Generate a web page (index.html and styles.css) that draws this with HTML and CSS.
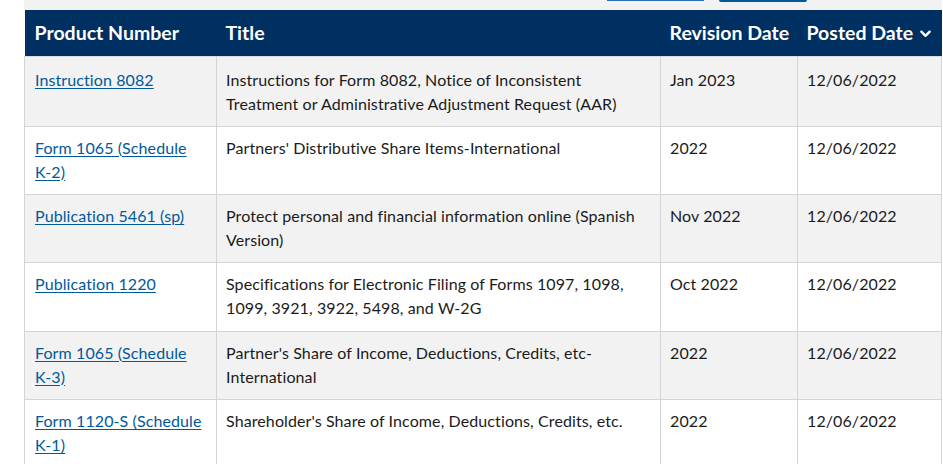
FILE: index.html
```html
<!DOCTYPE html>
<html lang="en">
<head>
<meta charset="utf-8">
<title>Forms &amp; Publications</title>
<link rel="stylesheet" href="styles.css">
</head>
<body>
<div class="page">
  <div class="toolbar">
    <span class="btn btn-outline"></span>
    <span class="btn btn-solid"></span>
  </div>
  <table class="pubs">
    <colgroup>
      <col class="c1"><col class="c2"><col class="c3"><col class="c4">
    </colgroup>
    <thead>
      <tr>
        <th>Product Number</th>
        <th>Title</th>
        <th>Revision Date</th>
        <th>Posted Date <svg class="chev" viewBox="0 0 12 10" width="12" height="10"><path d="M1.5 2.5 L6 7 L10.5 2.5" fill="none" stroke="#fff" stroke-width="2.6" stroke-linecap="round" stroke-linejoin="round"/></svg></th>
      </tr>
    </thead>
    <tbody>
      <tr class="odd first">
        <td><a href="#">Instruction 8082</a></td>
        <td>Instructions for Form 8082, Notice of Inconsistent Treatment or Administrative Adjustment Request (AAR)</td>
        <td>Jan 2023</td>
        <td>12/06/2022</td>
      </tr>
      <tr>
        <td><a href="#">Form 1065 (Schedule <span class="nw">K-2)</span></a></td>
        <td>Partners' Distributive Share Items-International</td>
        <td>2022</td>
        <td>12/06/2022</td>
      </tr>
      <tr class="odd">
        <td><a href="#">Publication 5461 (sp)</a></td>
        <td>Protect personal and financial information online (Spanish Version)</td>
        <td>Nov 2022</td>
        <td>12/06/2022</td>
      </tr>
      <tr>
        <td><a href="#">Publication 1220</a></td>
        <td>Specifications for Electronic Filing of Forms 1097, 1098, 1099, 3921, 3922, 5498, and W-2G</td>
        <td>Oct 2022</td>
        <td>12/06/2022</td>
      </tr>
      <tr class="odd">
        <td><a href="#">Form 1065 (Schedule <span class="nw">K-3)</span></a></td>
        <td>Partner's Share of Income, Deductions, Credits, etc-International</td>
        <td>2022</td>
        <td>12/06/2022</td>
      </tr>
      <tr>
        <td><a href="#">Form 1120-S (Schedule <span class="nw">K-1)</span></a></td>
        <td>Shareholder's Share of Income, Deductions, Credits, etc.</td>
        <td>2022</td>
        <td>12/06/2022</td>
      </tr>
    </tbody>
  </table>
</div>
</body>
</html>
```

FILE: styles.css
```css
* { box-sizing: border-box; }
html, body { margin: 0; padding: 0; background: #fff; }
body {
  font-family: "Lato", "Liberation Sans", sans-serif;
  color: #1b1b1b;
  overflow: hidden;
}
.page {
  padding-left: 24px;
  width: 942px;
}
.toolbar {
  height: 10px;
  background: #f2f2f2;
  display: flex;
  justify-content: flex-end;
  align-items: flex-start;
  gap: 15px;
  padding-right: 135px;
}
.btn { display: block; }
.btn-outline {
  width: 97px;
  height: 1px;
  background: #2f70ae;
}
.btn-solid {
  width: 88px;
  height: 2px;
  background: #00599c;
  border-radius: 0 0 4px 4px;
}
.pubs {
  width: 917px;
  border-collapse: collapse;
  table-layout: fixed;
  font-size: 16px;
  line-height: 24px;
  letter-spacing: 0.1px;
}
.c1 { width: 192px; }
.c2 { width: 444px; }
.c3 { width: 137px; }
.c4 { width: 144px; }
.pubs th {
  background: #002f62;
  color: #fff;
  font-weight: 700;
  font-size: 19.5px;
  letter-spacing: 0;
  text-align: left;
  height: 46px;
  padding: 0 6px 0 9px;
  white-space: nowrap;
}
.pubs th:first-child { padding-left: 10px; }
.chev { vertical-align: 1px; margin-left: 2px; width: 11px; }
.pubs td {
  vertical-align: top;
  padding: 9px 10px 10.3px 9px;
  border: 1px solid #d4d4d4;
  border-top: 1px solid #dcdcdc;
  background: #fff;
}
.pubs td:first-child { padding-left: 10px; }
.pubs tr.odd td { background: #f2f2f2; }
.pubs tr.first td { padding-top: 11px; }
.pubs a {
  color: #00599c;
  text-decoration: underline;
  text-underline-offset: 2px;
}
.nw { white-space: nowrap; }
```
